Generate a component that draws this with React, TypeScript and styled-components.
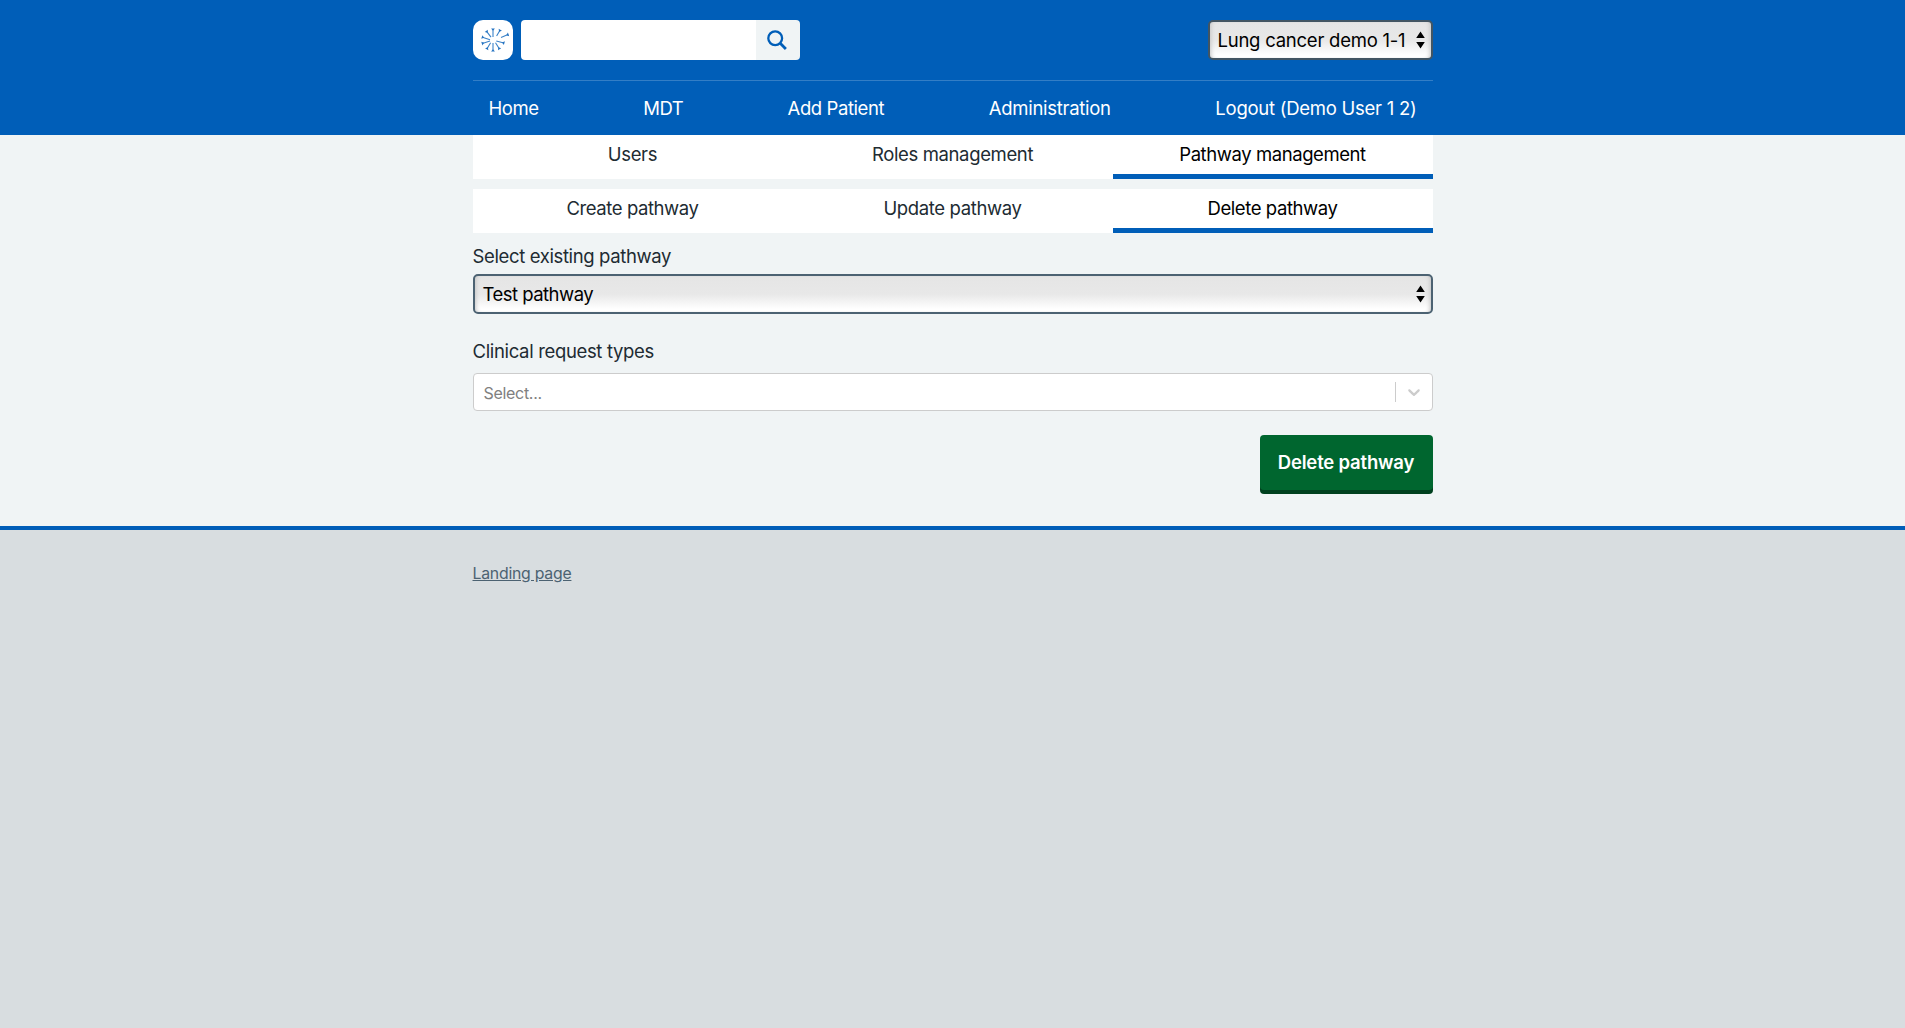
import React from "react";
import styled, { createGlobalStyle } from "styled-components";

const GlobalStyle = createGlobalStyle`
  *, *::before, *::after { box-sizing: border-box; }
  body {
    margin: 0;
    background: #d8dde0;
    color: #212b32;
    font: 400 18.5px/28px Inter, "Liberation Sans", sans-serif;
    -webkit-font-smoothing: antialiased;
  }
`;

const Header = styled.header`
  height: 135px;
  background: #005eb8;
`;

const Container = styled.div`
  width: 960px;
  margin: 0 auto;
`;

const TopBar = styled.div`
  display: flex;
  justify-content: space-between;
  padding: 20px 0;
  height: 80px;
`;

const Brand = styled.div`
  display: flex;
  gap: 8px;
`;

const LogoBox = styled.a`
  display: block;
  width: 40px;
  height: 40px;
  border-radius: 10px;
  background: #fff;
  overflow: hidden;
`;

const SearchForm = styled.form`
  display: flex;
  width: 279px;
  height: 40px;
  border-radius: 4px;
  overflow: hidden;
`;

const SearchInput = styled.input`
  flex: 1;
  min-width: 0;
  border: 0;
  padding: 0 12px;
  background: #fff;
  font: inherit;
  outline: none;
`;

const SearchButton = styled.button`
  display: block;
  width: 44px;
  padding: 0;
  border: 0;
  background: #f0f4f5;
  line-height: 0;
`;

const SelectBox = styled.button<{ $width: string; $border: string; $tracking: number }>`
  display: flex;
  align-items: center;
  justify-content: space-between;
  width: ${(p) => p.$width};
  height: 40px;
  padding: 0 6px 0 8px;
  border: 2px solid ${(p) => p.$border};
  border-radius: 5px;
  background: linear-gradient(#e5e5e5, #e8e8e8 50%, #fff 92%);
  box-shadow: inset 4px 0 4px -3px #c4c4c4, inset -4px 0 4px -3px #c4c4c4;
  color: #000;
  font: inherit;
  letter-spacing: ${(p) => p.$tracking}px;
  text-align: left;
`;

const Nav = styled.nav`
  display: flex;
  align-items: center;
  justify-content: space-between;
  height: 55px;
  padding: 1px 16px 0;
  box-shadow: inset 0 1px 0 #337ec6;
`;

const NavLink = styled.a<{ $tracking: number }>`
  color: #fff;
  letter-spacing: ${(p) => p.$tracking}px;
`;

const Main = styled.main`
  height: 391px;
  background: #f0f4f5;
`;

const TabList = styled.ul`
  display: grid;
  grid-template-columns: repeat(3, 1fr);
  height: 44px;
  margin: 0 0 10px;
  padding: 0;
  list-style: none;
  background: #fff;
`;

const Tab = styled.li<{ $active?: boolean; $tracking: number }>`
  display: flex;
  align-items: center;
  justify-content: center;
  padding-bottom: 2px;
  border-bottom: 5px solid ${(p) => (p.$active ? "#005eb8" : "#fff")};
  color: ${(p) => (p.$active ? "#000" : "#212b32")};
  letter-spacing: ${(p) => p.$tracking}px;
`;

const FieldLabel = styled.label<{ $tracking: number }>`
  display: block;
  height: 31px;
  line-height: 27px;
  letter-spacing: ${(p) => p.$tracking}px;
`;

const Field = styled.div`
  margin-bottom: 24px;
`;

const MultiSelect = styled.div`
  display: flex;
  align-items: center;
  height: 38px;
  margin-top: 4px;
  padding-left: 10px;
  border: 1px solid #ccc;
  border-radius: 4px;
  background: #fff;
`;

const Placeholder = styled.span`
  flex: 1;
  padding-top: 1px;
  color: #808080;
  font-size: 16px;
  letter-spacing: -0.3px;
`;

const Separator = styled.span`
  width: 1px;
  height: 20px;
  background: #ccc;
`;

const Indicator = styled.span`
  display: flex;
  padding: 8px;
`;

const Actions = styled.div`
  display: flex;
  justify-content: flex-end;
`;

const SubmitButton = styled.button`
  width: 173px;
  height: 55px;
  padding: 0 0 1px;
  border: 0;
  border-radius: 4px;
  background: #00662f;
  box-shadow: 0 4px 0 #00401e;
  color: #fff;
  font: inherit;
  font-weight: 600;
  letter-spacing: -0.18px;
`;

const Footer = styled.footer`
  height: 498px;
  padding-top: 30px;
  border-top: 4px solid #005eb8;
  background: #d8dde0;
`;

const FooterLink = styled.a`
  display: block;
  width: fit-content;
  color: #4c6272;
  font-size: 15.8px;
  line-height: 27px;
  letter-spacing: -0.23px;
  text-decoration: underline;
`;

const spokes = [
  [20, 17, 20, 9],
  [23.6, 16, 27, 10.2],
  [28, 17.4, 35, 14.6],
  [23.3, 21, 30.8, 23],
  [22.5, 22.8, 26.3, 28.8],
  [20, 23, 20, 31],
  [17.6, 22.8, 14, 28.8],
  [17, 21, 9.4, 23.4],
  [17, 19.7, 9.4, 17.2],
  [18, 17.2, 13.6, 11.4],
];

function Logo() {
  return (
    <svg width="40" height="40" viewBox="0 0 40 40" fill="none" stroke="#3b82c8" strokeWidth="1.1">
      {spokes.map(([x1, y1, x2, y2], i) => {
        const length = Math.hypot(x2 - x1, y2 - y1);
        const dx = (x2 - x1) / length;
        const dy = (y2 - y1) / length;
        const cap = `M${x2 + dx * 0.6 - dy * 1.9} ${y2 + dy * 0.6 + dx * 1.9}L${x2 + dx * 0.6 + dy * 1.9} ${y2 + dy * 0.6 - dx * 1.9}L${x2 - dx * 1.8} ${y2 - dy * 1.8}Z`;
        return (
          <g key={i}>
            <path d={`M${x1} ${y1}L${x2} ${y2}`} />
            <path d={cap} fill="#2573c1" stroke="none" />
          </g>
        );
      })}
    </svg>
  );
}

function Arrows() {
  return (
    <svg width="9" height="18" viewBox="0 0 9 18" fill="#000">
      <path d="M4.5 .5 8.8 7H.2ZM4.5 17.5.2 11h8.6Z" />
    </svg>
  );
}

const navItems: [string, number][] = [
  ["Home", -0.4],
  ["MDT", -0.6],
  ["Add Patient", -0.42],
  ["Administration", -0.28],
  ["Logout (Demo User 1 2)", -0.26],
];

const sections: [string, number][] = [
  ["Users", -0.32],
  ["Roles management", -0.36],
  ["Pathway management", -0.42],
];

const actions: [string, number][] = [
  ["Create pathway", -0.42],
  ["Update pathway", -0.37],
  ["Delete pathway", -0.41],
];

function Tabs({ items }: { items: [string, number][] }) {
  return (
    <TabList>
      {items.map(([text, tracking], i) => (
        <Tab key={text} $tracking={tracking} $active={i === items.length - 1}>
          {text}
        </Tab>
      ))}
    </TabList>
  );
}

export default function App() {
  return (
    <>
      <GlobalStyle />
      <Header>
        <Container>
          <TopBar>
            <Brand>
              <LogoBox><Logo /></LogoBox>
              <SearchForm>
                <SearchInput aria-label="Search" />
                <SearchButton type="button" aria-label="Submit search">
                  <svg width="44" height="40" viewBox="0 0 44 40" fill="none" stroke="#005eb8" strokeWidth="2.3">
                    <circle cx="19.2" cy="18.3" r="6.9" />
                    <path d="m24.2 23.2 5.7 5.7" strokeWidth="2.8" />
                  </svg>
                </SearchButton>
              </SearchForm>
            </Brand>
            <SelectBox type="button" $width="225px" $border="#425563" $tracking={-0.24}>
              Lung cancer demo 1-1
              <Arrows />
            </SelectBox>
          </TopBar>
          <Nav>
            {navItems.map(([text, tracking]) => (
              <NavLink key={text} $tracking={tracking}>{text}</NavLink>
            ))}
          </Nav>
        </Container>
      </Header>
      <Main>
        <Container>
          <Tabs items={sections} />
          <Tabs items={actions} />
          <Field>
            <FieldLabel $tracking={-0.37}>Select existing pathway</FieldLabel>
            <SelectBox type="button" $width="100%" $border="#4c6272" $tracking={-0.52}>
              Test pathway
              <Arrows />
            </SelectBox>
          </Field>
          <Field>
            <FieldLabel $tracking={-0.34}>Clinical request types</FieldLabel>
            <MultiSelect>
              <Placeholder>Select...</Placeholder>
              <Separator />
              <Indicator>
                <svg width="20" height="20" viewBox="0 0 20 20" fill="#ccc">
                  <path d="M4.516 7.548c0.436-0.446 1.043-0.481 1.576 0l3.908 3.747 3.908-3.747c0.533-0.481 1.141-0.446 1.574 0 0.436 0.445 0.408 1.197 0 1.615-0.406 0.418-4.695 4.502-4.695 4.502-0.217 0.223-0.502 0.335-0.787 0.335s-0.57-0.112-0.789-0.335c0 0-4.287-4.084-4.695-4.502s-0.436-1.17 0-1.615z" />
                </svg>
              </Indicator>
            </MultiSelect>
          </Field>
          <Actions>
            <SubmitButton type="button">Delete pathway</SubmitButton>
          </Actions>
        </Container>
      </Main>
      <Footer>
        <Container>
          <FooterLink>Landing page</FooterLink>
        </Container>
      </Footer>
    </>
  );
}
